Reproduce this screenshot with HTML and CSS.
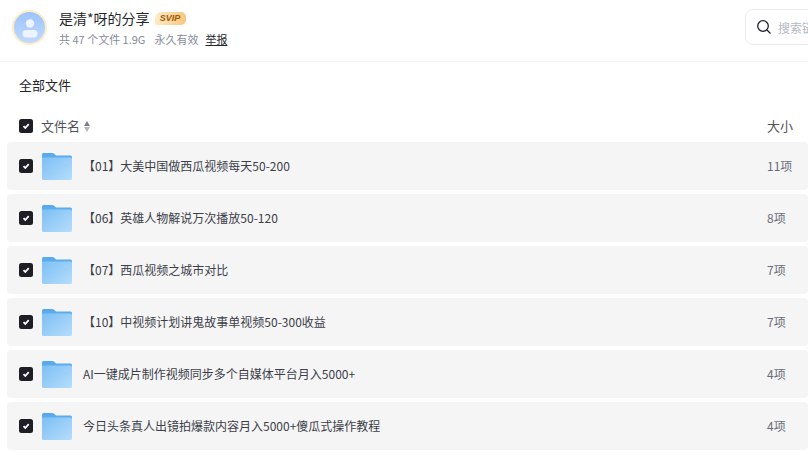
FILE: index.html
```html
<!DOCTYPE html>
<html lang="zh-CN">
<head>
    <meta charset="UTF-8">
    <title>是清*呀的分享</title>
    <link rel="stylesheet" href="styles.css">
</head>
<body>
    <svg class="defs" width="0" height="0">
        <defs>
            <linearGradient id="folderBack" x1="0" y1="0" x2="0" y2="1">
                <stop offset="0" stop-color="#55a8ec"/>
                <stop offset="1" stop-color="#6db6f2"/>
            </linearGradient>
            <linearGradient id="folderFront" x1="0" y1="0" x2="1" y2="1">
                <stop offset="0" stop-color="#7dbff5"/>
                <stop offset="1" stop-color="#b5ddfb"/>
            </linearGradient>
            <symbol id="folder" viewBox="0 0 30 27">
                <path d="M0 1.500Q0 0 1.500 0H10Q11.500 0 12.500 1L14 2.500H28.500Q30 2.500 30 4V12H0Z" fill="url(#folderBack)"/>
                <path d="M0 4.500H28.500Q30 4.500 30 6V25.500Q30 27 28.500 27H1.500Q0 27 0 25.500Z" fill="url(#folderFront)"/>
                <rect x="22" y="8.500" width="4" height="1.500" fill="#9fd0f8"/>
            </symbol>
            <symbol id="check" viewBox="0 0 14 14">
                <rect width="14" height="14" rx="2.500" fill="#1d1e26"/>
                <path d="M4.500 7.200L6.300 9L9.700 5.200" fill="none" stroke="#fff" stroke-width="1.800"/>
            </symbol>
        </defs>
    </svg>

    <header class="top">
        <div class="avatar">
            <svg width="30" height="30" viewBox="0 0 30 30">
                <circle cx="15" cy="10.500" r="4.200" fill="#eef4ff"/>
                <rect x="7.500" y="17" width="15" height="7.500" rx="3.700" fill="#eef4ff"/>
            </svg>
        </div>
        <div class="share-info">
            <div class="share-title">
                <strong>是清*呀的分享</strong>
                <span class="svip">SVIP</span>
            </div>
            <div class="share-meta">
                <span>共 47 个文件 1.9G</span>
                <span>永久有效</span>
                <a class="report">举报</a>
            </div>
        </div>
        <div class="search">
            <svg width="16" height="16" viewBox="0 0 16 16">
                <circle cx="7" cy="7" r="5.300" fill="none" stroke="#1d1e30" stroke-width="1.300"/>
                <path d="M11 11L14.500 14.500" stroke="#1d1e30" stroke-width="1.300"/>
            </svg>
            <span class="search-text">搜索链接内文件</span>
        </div>
    </header>

    <div class="crumb">全部文件</div>

    <div class="list-head">
        <svg class="check"><use href="#check"/></svg>
        <span class="name-col">文件名</span>
        <span class="sort"><i class="up"></i><i class="down"></i></span>
        <span class="size-col">大小</span>
    </div>

    <div class="rows">
        <div class="row">
            <svg class="check"><use href="#check"/></svg>
            <svg class="folder"><use href="#folder"/></svg>
            <span class="row-name">【01】大美中国做西瓜视频每天50-200</span>
            <span class="row-size">11项</span>
        </div>
        <div class="row">
            <svg class="check"><use href="#check"/></svg>
            <svg class="folder"><use href="#folder"/></svg>
            <span class="row-name">【06】英雄人物解说万次播放50-120</span>
            <span class="row-size">8项</span>
        </div>
        <div class="row">
            <svg class="check"><use href="#check"/></svg>
            <svg class="folder"><use href="#folder"/></svg>
            <span class="row-name">【07】西瓜视频之城市对比</span>
            <span class="row-size">7项</span>
        </div>
        <div class="row">
            <svg class="check"><use href="#check"/></svg>
            <svg class="folder"><use href="#folder"/></svg>
            <span class="row-name">【10】中视频计划讲鬼故事单视频50-300收益</span>
            <span class="row-size">7项</span>
        </div>
        <div class="row">
            <svg class="check"><use href="#check"/></svg>
            <svg class="folder"><use href="#folder"/></svg>
            <span class="row-name">AI一键成片制作视频同步多个自媒体平台月入5000+</span>
            <span class="row-size">4项</span>
        </div>
        <div class="row">
            <svg class="check"><use href="#check"/></svg>
            <svg class="folder"><use href="#folder"/></svg>
            <span class="row-name">今日头条真人出镜拍爆款内容月入5000+傻瓜式操作教程</span>
            <span class="row-size">4项</span>
        </div>
    </div>
</body>
</html>
```

FILE: styles.css
```css
*{
    margin:0;
    padding:0;
    box-sizing:border-box;
}

html,body{
    height:455px;
    overflow:hidden;
}

body{
    width:808px;
    background-color:#fff;
    font-family:"Noto Sans CJK SC","Noto Sans",sans-serif;
    color:#25262b;
}

.defs{
    display:block;
    height:0;
}

.top{
    display:flex;
    align-items:center;
    height:62px;
    padding-left:12px;
    border-bottom:1px solid #f3f3f5;
    overflow:hidden;
}

.avatar{
    display:flex;
    align-items:center;
    justify-content:center;
    flex:none;
    width:35px;
    height:35px;
    margin-top:-6px;
    border:2.500px solid #fdedc5;
    border-radius:50%;
    background:linear-gradient(180deg,#9cc4fd,#c3d9ff);
}

.share-info{
    flex:none;
    width:686px;
    margin-left:12px;
    margin-top:-6px;
}

.share-title{
    display:flex;
    align-items:center;
    height:20px;
}

.share-title strong{
    font-size:14px;
    font-weight:400;
    color:#25262b;
}

.svip{
    width:31px;
    height:13px;
    margin-left:5px;
    border-radius:7px 5px 5px 2px;
    background:linear-gradient(90deg,#fdebc9,#fbc67a);
    font-family:"Liberation Sans",sans-serif;
    font-size:9px;
    font-style:italic;
    font-weight:700;
    line-height:13px;
    text-align:center;
    color:#9c5a0c;
}

.share-meta{
    display:flex;
    gap:9px;
    margin-top:3px;
    font-size:11px;
    line-height:16px;
    color:#878c9c;
}

.report{
    margin-left:-2px;
    color:#25262b;
    text-decoration:underline;
}

.search{
    display:flex;
    flex:none;
    align-items:center;
    gap:6px;
    width:120px;
    height:36px;
    margin-top:-7px;
    padding-left:10px;
    border:1px solid #e9eaee;
    border-radius:8px;
    font-size:12px;
    color:#b4b8c2;
    white-space:nowrap;
}

.crumb{
    height:49px;
    padding:13px 0 0 19px;
    font-size:13px;
    line-height:20px;
}

.list-head{
    display:flex;
    align-items:center;
    height:30px;
    padding:0 15px 0 19px;
    font-size:13px;
    color:#50525a;
}

.check{
    flex:none;
    width:14px;
    height:14px;
}

.name-col{
    margin-left:8px;
    padding-bottom:2px;
}

.sort{
    display:flex;
    flex-direction:column;
    gap:1px;
    margin-left:4px;
}

.sort i{
    display:block;
    width:0;
    height:0;
    border-left:3.500px solid transparent;
    border-right:3.500px solid transparent;
}

.sort .up{
    border-bottom:5px solid #7b7d85;
}

.sort .down{
    border-top:5px solid #b4b6bd;
}

.size-col{
    margin-left:auto;
    padding-bottom:2px;
}

.rows{
    display:flex;
    flex-direction:column;
    gap:4px;
    margin-top:1px;
    padding-left:7px;
}

.row{
    display:flex;
    align-items:center;
    height:48px;
    padding:0 15px 0 12px;
    border-radius:4px;
    background-color:#f5f5f6;
}

.folder{
    flex:none;
    width:30px;
    height:27px;
    margin-left:9px;
    margin-top:1px;
}

.row-name{
    margin-left:11px;
    padding-bottom:2px;
    font-size:12px;
    color:#3c3e48;
}

.row-size{
    width:26px;
    margin-left:auto;
    padding-bottom:2px;
    font-size:12px;
    color:#6a6c76;
}
```
